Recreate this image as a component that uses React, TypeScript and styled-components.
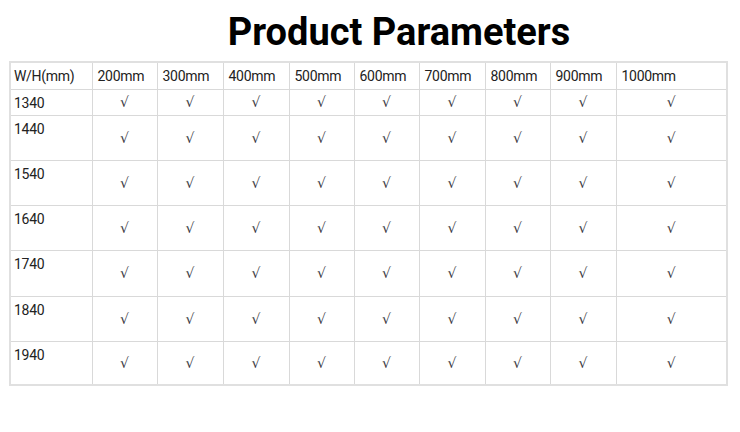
import React from "react";
import styled, { createGlobalStyle } from "styled-components";

const Global = createGlobalStyle`
  html, body { margin: 0; padding: 0; background: #fff; }
  body { font-family: Roboto, "Liberation Sans", sans-serif; color: #222; }
`;

const Page = styled.div`
  width: 740px;
  height: 432px;
  background: #fff;
  overflow: hidden;
`;

const Title = styled.h1`
  margin: 0;
  height: 61px;
  box-sizing: border-box;
  padding: 13px 0 0 58px;
  font-family: Roboto, "Liberation Sans", sans-serif;
  font-weight: 700;
  font-size: 38px;
  line-height: 38px;
  text-align: center;
  color: #000;
`;

const Table = styled.table`
  margin-left: 9px;
  width: 717px;
  border-collapse: collapse;
  table-layout: fixed;
  font-size: 14px;
  letter-spacing: -0.3px;
  color: #222;
  border: 2px solid #e0e0e0;
`;

const Row = styled.tr<{ $h: number }>`
  height: ${(p) => p.$h}px;
`;

const HeadCell = styled.td<{ $first?: boolean }>`
  border: 1px solid #d9d9d9;
  padding: 0 0 0 ${(p) => (p.$first ? 3 : 5)}px;
  text-align: left;
  vertical-align: middle;
  line-height: 16px;
  white-space: nowrap;
  overflow: hidden;
`;

const LabelCell = styled.td`
  border: 1px solid #d9d9d9;
  padding: 5px 3px 0 3px;
  vertical-align: top;
  line-height: 16px;
`;

const Check = styled.td`
  border: 1px solid #d9d9d9;
  padding: 0;
  text-align: center;
  vertical-align: middle;
  font-family: "DejaVu Serif", "Liberation Serif", serif;
  font-size: 14px;
  letter-spacing: 0;
  color: #3a3a44;
`;

const widths = [82, 65, 66, 66, 65, 65, 66, 65, 66, 111];
const sizes = ["200mm", "300mm", "400mm", "500mm", "600mm", "700mm", "800mm", "900mm", "1000mm"];
const rows = [
  { label: "1340", h: 26 },
  { label: "1440", h: 45 },
  { label: "1540", h: 45 },
  { label: "1640", h: 45 },
  { label: "1740", h: 46 },
  { label: "1840", h: 45 },
  { label: "1940", h: 44 },
];

export default function App() {
  return (
    <Page>
      <Global />
      <Title>Product Parameters</Title>
      <Table>
        <colgroup>
          {widths.map((w, i) => (
            <col key={i} style={{ width: w }} />
          ))}
        </colgroup>
        <tbody>
          <Row $h={27}>
            <HeadCell $first>W/H(mm)</HeadCell>
            {sizes.map((s) => (
              <HeadCell key={s}>{s}</HeadCell>
            ))}
          </Row>
          {rows.map((r) => (
            <Row key={r.label} $h={r.h}>
              <LabelCell>{r.label}</LabelCell>
              {sizes.map((s) => (
                <Check key={s}>√</Check>
              ))}
            </Row>
          ))}
        </tbody>
      </Table>
    </Page>
  );
}
